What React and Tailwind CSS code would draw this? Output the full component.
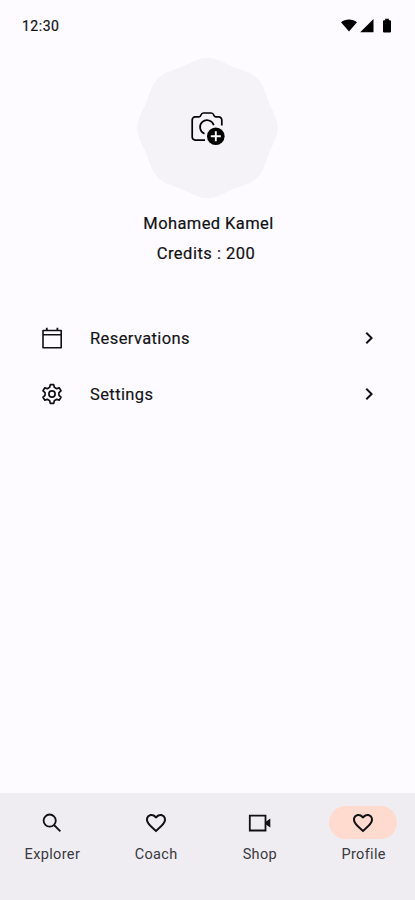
import { MdChevronRight, MdFavoriteBorder } from 'react-icons/md';

// eight-lobed badge outline
const scallop = (() => {
  const points = [];
  for (let i = 0; i < 180; i++) {
    const a = (i * Math.PI) / 90;
    const r = 68.3 + 1.9 * Math.cos(8 * a);
    points.push(`${(70.5 + r * Math.cos(a)).toFixed(2)} ${(71 + r * Math.sin(a)).toFixed(2)}`);
  }
  return `M${points.join('L')}Z`;
})();

// one tooth, repeated every 60 degrees
const gear = (() => {
  const tooth = [[-2.3, -6.7], [-1.7, -9.4], [1.7, -9.4], [2.3, -6.7]];
  const points = [];
  for (let i = 0; i < 6; i++) {
    const a = (i * Math.PI) / 3;
    tooth.forEach(([x, y]) => {
      const px = 12 + x * Math.cos(a) - y * Math.sin(a);
      const py = 12 + x * Math.sin(a) + y * Math.cos(a);
      points.push(`${px.toFixed(2)} ${py.toFixed(2)}`);
    });
  }
  return `M${points.join('L')}Z`;
})();

const CalendarIcon = () => (
  <svg className="size-6" viewBox="0 0 24 24" fill="none" stroke="currentColor" strokeWidth="1.6" strokeLinejoin="round">
    <path d="M3 4.5h18.2v17.3H3zM3 8.8h18.2" />
    <path d="M6.8 1.8v2.7M17.4 1.8v2.7" strokeWidth="1.8" />
  </svg>
);

const SettingsIcon = () => (
  <svg className="size-6" viewBox="0 0 24 24" fill="none" stroke="currentColor" strokeWidth="1.7" strokeLinejoin="round">
    <path d={gear} />
    <circle cx="12" cy="12" r="3.1" />
  </svg>
);

const SearchIcon = () => (
  <svg className="size-6" viewBox="0 0 24 24" fill="none" stroke="currentColor" strokeWidth="1.8">
    <circle cx="9.7" cy="9.6" r="6.1" />
    <path d="M14 14l6.4 6.4" />
  </svg>
);

const VideoIcon = () => (
  <svg className="size-6" viewBox="0 0 24 24" fill="none">
    <path d="M2.8 4.7h15.7v14.8H2.8z" stroke="currentColor" strokeWidth="1.8" />
    <path d="M18.5 11l4.8-3.4v9L18.5 13.2z" fill="currentColor" />
  </svg>
);

const CameraIcon = () => (
  <svg className="absolute top-[52px] left-[53px]" width="37" height="37" viewBox="0 0 37 37" fill="none">
    <path
      d="M15 31.1H5.2a3 3 0 0 1-3-3V10.9a3 3 0 0 1 3-3H9c1.3 0 1.6-.7 2-1.9.4-1.2 1-2 2.4-2h7.9c1.4 0 2 .8 2.4 2 .4 1.2.7 1.9 2 1.9h3.1a3 3 0 0 1 3 3V16.5"
      stroke="black"
      strokeWidth="1.7"
    />
    <path d="M14.5 24.7a7 7 0 1 1 9.3-8.4" stroke="black" strokeWidth="1.7" />
    <circle cx="25.8" cy="27.3" r="8.8" fill="black" />
    <path d="M25.8 22.3v10M20.8 27.3h10" stroke="white" strokeWidth="1.9" />
  </svg>
);

const StatusBar = () => (
  <div className="flex h-[52px] items-center justify-between px-[22px]">
    <span className="text-[14px] tracking-[0.5px] [-webkit-text-stroke:0.2px]">12:30</span>
    <svg width="52" height="16" viewBox="0 0 52 16" fill="black">
      <path d="M0 4.2C4.5.7 11.5.7 16 4.2L8 13.5z" />
      <path d="M32.5 1v13.3H19.2z" />
      <path d="M42 3.2a1 1 0 0 1 1-1h1.2V.8h3.6v1.4H49a1 1 0 0 1 1 1v10.3a1 1 0 0 1-1 1h-6a1 1 0 0 1-1-1z" />
    </svg>
  </div>
);

const rows = [
  { label: 'Reservations', icon: <CalendarIcon /> },
  { label: 'Settings', icon: <SettingsIcon /> },
];

const tabs = [
  { label: 'Explorer', icon: <SearchIcon /> },
  { label: 'Coach', icon: <MdFavoriteBorder className="size-6" /> },
  { label: 'Shop', icon: <VideoIcon /> },
  { label: 'Profile', icon: <MdFavoriteBorder className="size-6" />, active: true },
];

const App = () => {
  return (
    <div className="flex h-[900px] w-[415px] flex-col bg-[#fdfbff] font-['Roboto',sans-serif] text-[#111114]">
      <StatusBar />
      <section className="flex flex-col items-center pt-[5px]">
        <div className="relative size-[142px]">
          <svg width="142" height="142" viewBox="0 0 142 142">
            <path d={scallop} fill="#f5f3f8" />
          </svg>
          <CameraIcon />
        </div>
        <p className="mt-[13px] pl-0.5 text-[16.5px] leading-6 tracking-[0.4px] [-webkit-text-stroke:0.2px]">Mohamed Kamel</p>
        <p className="mt-[6px] pr-[3px] text-[16.5px] leading-6 tracking-[0.5px] [-webkit-text-stroke:0.2px]">Credits : 200</p>
      </section>
      <ul className="mt-11">
        {rows.map((row) => (
          <li key={row.label} className="flex h-14 items-center pl-10 pr-[34px]">
            {row.icon}
            <span className="ml-[26px] flex-1 pt-0.5 text-[16.5px] tracking-[0.4px] [-webkit-text-stroke:0.15px]">{row.label}</span>
            <MdChevronRight className="size-6" />
          </li>
        ))}
      </ul>
      <nav className="mt-auto flex h-[107px] bg-[#efedf1] pt-[13px]">
        {tabs.map((tab) => (
          <div key={tab.label} className="flex flex-1 flex-col items-center">
            <span
              className={`flex h-[33px] w-[68px] items-center justify-center rounded-full ${tab.active ? 'bg-[#ffdbcf]' : ''}`}
            >
              {tab.icon}
            </span>
            <span className="mt-1.5 pl-px text-[14.5px] leading-5 tracking-[0.35px] text-[#39393f]">{tab.label}</span>
          </div>
        ))}
      </nav>
    </div>
  );
};

export default App;
